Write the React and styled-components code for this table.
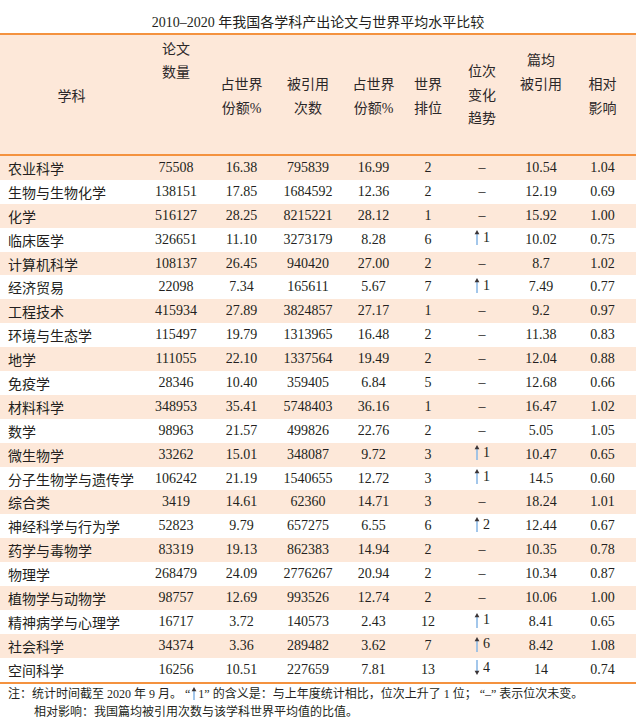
import React from "react";
import styled, { createGlobalStyle } from "styled-components";

const GlobalStyle = createGlobalStyle`
  html, body { margin: 0; padding: 0; background: #ffffff; }
  body {
    font-family: "Liberation Serif", "Noto Sans CJK SC", serif;
    color: #231f20;
  }
`;

const COLS = "143px 66px 65px 68px 63px 46px 62px 56px 67px";
const ORANGE = "#f4923f";
const PINK = "#fde8d9";

const Page = styled.div`
  width: 640px;
`;

const Title = styled.div`
  width: 636px;
  padding-top: 13px;
  height: 20px;
  line-height: 20px;
  font-size: 14px;
  text-align: center;
  letter-spacing: 0;
`;

const Table = styled.div`
  width: 636px;
  border-top: 2px solid ${ORANGE};
  border-bottom: 2px solid ${ORANGE};
`;

const HeaderRow = styled.div`
  display: grid;
  grid-template-columns: ${COLS};
  height: 119px;
  background: ${PINK};
  border-bottom: 2px solid ${ORANGE};
`;

const HeadCell = styled.div`
  padding-top: ${(p) => p.$pt}px;
  font-size: 14px;
  line-height: 23.5px;
  text-align: center;
  color: #2b2728;
`;

const Row = styled.div`
  display: grid;
  grid-template-columns: ${COLS};
  height: 23.9px;
  align-items: center;
  background: ${(p) => (p.$shaded ? PINK : "transparent")};
  font-size: 14px;
`;

const Cell = styled.div`
  text-align: center;
  white-space: nowrap;
`;

const SubjectCell = styled.div`
  padding-left: 8px;
  white-space: nowrap;
`;

const Trend = styled.span`
  display: inline-flex;
  align-items: center;
  gap: 3px;
`;

const ArrowSvg = styled.svg`
  display: block;
`;

const Note = styled.div`
  font-size: 12px;
  line-height: 18.5px;
  padding-top: 1px;
  padding-left: 8px;
  white-space: nowrap;
`;

const NoteLine = styled.div`
  padding-left: ${(p) => (p.$indent ? 26 : 0)}px;
  display: flex;
  align-items: center;
`;

const InlineArrow = styled.span`
  display: inline-flex;
  margin: 0 1px;
`;

function Arrow({ dir = "up", h = 15 }) {
  const up = dir === "up";
  return (
    <ArrowSvg width="6" height={h} viewBox={`0 0 6 ${h}`}>
      <line
        x1="3"
        x2="3"
        y1={up ? 3 : 0}
        y2={up ? h : h - 3}
        stroke="#8cb9e6"
        strokeWidth="1.6"
      />
      {up ? (
        <polygon points="3,0 0.6,4.2 5.4,4.2" fill="#3a3436" />
      ) : (
        <polygon points={`3,${h} 0.6,${h - 4.2} 5.4,${h - 4.2}`} fill="#3a3436" />
      )}
    </ArrowSvg>
  );
}

const rows = [
  ["农业科学", "75508", "16.38", "795839", "16.99", "2", "–", "10.54", "1.04"],
  ["生物与生物化学", "138151", "17.85", "1684592", "12.36", "2", "–", "12.19", "0.69"],
  ["化学", "516127", "28.25", "8215221", "28.12", "1", "–", "15.92", "1.00"],
  ["临床医学", "326651", "11.10", "3273179", "8.28", "6", "↑1", "10.02", "0.75"],
  ["计算机科学", "108137", "26.45", "940420", "27.00", "2", "–", "8.7", "1.02"],
  ["经济贸易", "22098", "7.34", "165611", "5.67", "7", "↑1", "7.49", "0.77"],
  ["工程技术", "415934", "27.89", "3824857", "27.17", "1", "–", "9.2", "0.97"],
  ["环境与生态学", "115497", "19.79", "1313965", "16.48", "2", "–", "11.38", "0.83"],
  ["地学", "111055", "22.10", "1337564", "19.49", "2", "–", "12.04", "0.88"],
  ["免疫学", "28346", "10.40", "359405", "6.84", "5", "–", "12.68", "0.66"],
  ["材料科学", "348953", "35.41", "5748403", "36.16", "1", "–", "16.47", "1.02"],
  ["数学", "98963", "21.57", "499826", "22.76", "2", "–", "5.05", "1.05"],
  ["微生物学", "33262", "15.01", "348087", "9.72", "3", "↑1", "10.47", "0.65"],
  ["分子生物学与遗传学", "106242", "21.19", "1540655", "12.72", "3", "↑1", "14.5", "0.60"],
  ["综合类", "3419", "14.61", "62360", "14.71", "3", "–", "18.24", "1.01"],
  ["神经科学与行为学", "52823", "9.79", "657275", "6.55", "6", "↑2", "12.44", "0.67"],
  ["药学与毒物学", "83319", "19.13", "862383", "14.94", "2", "–", "10.35", "0.78"],
  ["物理学", "268479", "24.09", "2776267", "20.94", "2", "–", "10.34", "0.87"],
  ["植物学与动物学", "98757", "12.69", "993526", "12.74", "2", "–", "10.06", "1.00"],
  ["精神病学与心理学", "16717", "3.72", "140573", "2.43", "12", "↑1", "8.41", "0.65"],
  ["社会科学", "34374", "3.36", "289482", "3.62", "7", "↑6", "8.42", "1.08"],
  ["空间科学", "16256", "10.51", "227659", "7.81", "13", "↓4", "14", "0.74"],
];

const headers = [
  { lines: ["学科"], pt: 50 },
  { lines: ["论文", "数量"], pt: 2.5 },
  { lines: ["占世界", "份额%"], pt: 38 },
  { lines: ["被引用", "次数"], pt: 38 },
  { lines: ["占世界", "份额%"], pt: 38 },
  { lines: ["世界", "排位"], pt: 38 },
  { lines: ["位次", "变化", "趋势"], pt: 25 },
  { lines: ["篇均", "被引用"], pt: 14 },
  { lines: ["相对", "影响"], pt: 38 },
];

function TrendCell({ value }) {
  if (value === "–") return <Cell>–</Cell>;
  const dir = value[0] === "↓" ? "down" : "up";
  return (
    <Cell>
      <Trend>
        <Arrow dir={dir} />
        <span>{value.slice(1)}</span>
      </Trend>
    </Cell>
  );
}

export default function App() {
  return (
    <Page>
      <GlobalStyle />
      <Title>2010–2020 年我国各学科产出论文与世界平均水平比较</Title>
      <Table>
        <HeaderRow>
          {headers.map((h, i) => (
            <HeadCell key={i} $pt={h.pt}>
              {h.lines.map((l, j) => (
                <div key={j}>{l}</div>
              ))}
            </HeadCell>
          ))}
        </HeaderRow>
        {rows.map((r, i) => (
          <Row key={r[0]} $shaded={i % 2 === 0}>
            <SubjectCell>{r[0]}</SubjectCell>
            <Cell>{r[1]}</Cell>
            <Cell>{r[2]}</Cell>
            <Cell>{r[3]}</Cell>
            <Cell>{r[4]}</Cell>
            <Cell>{r[5]}</Cell>
            <TrendCell value={r[6]} />
            <Cell>{r[7]}</Cell>
            <Cell>{r[8]}</Cell>
          </Row>
        ))}
      </Table>
      <Note>
        <NoteLine>
          注：统计时间截至 2020 年 9 月。 “
          <InlineArrow>
            <Arrow dir="up" h={13} />
          </InlineArrow>
          1” 的含义是：与上年度统计相比，位次上升了 1 位； “–” 表示位次未变。
        </NoteLine>
        <NoteLine $indent>相对影响：我国篇均被引用次数与该学科世界平均值的比值。</NoteLine>
      </Note>
    </Page>
  );
}
